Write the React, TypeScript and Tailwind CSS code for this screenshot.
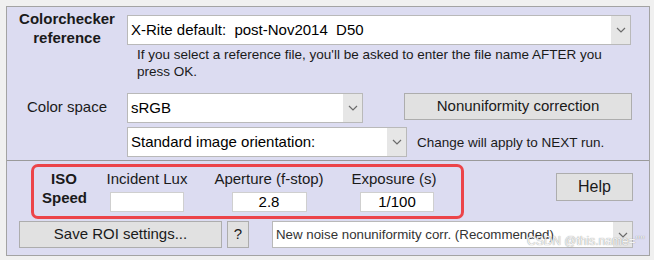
import React from "react";

const font = { fontFamily: '"Liberation Sans", Arial, sans-serif' };

function Chevron() {
  return (
    <svg width="10" height="6" viewBox="0 0 10 6" className="block">
      <polyline points="1,1 5,5 9,1" fill="none" stroke="#6b6b6b" strokeWidth="1.2" />
    </svg>
  );
}

function Dropdown({ text, className, textClass }: { text: string; className: string; textClass?: string }) {
  return (
    <div className={`flex bg-white border border-[#b9b9b9] ${className}`}>
      <div className={`flex-1 flex items-center pl-[3px] whitespace-pre overflow-hidden ${textClass ?? "text-[15px] text-black"}`}>
        {text}
      </div>
      <div className="w-[19px] bg-[#e6e6e6] flex items-center justify-center">
        <Chevron />
      </div>
    </div>
  );
}

export default function App() {
  return (
    <div className="w-[654px] h-[260px] bg-[#f0f0f0] pt-[6px] pl-[6px] relative overflow-hidden" style={font}>
      <div className="w-[644px] h-[250px] border border-[#a3a3a3] bg-[#dcdcf1] flex flex-col">
        {/* Top section */}
        <div className="h-[154px] border-b border-[#9a9a9a] flex flex-col">
          {/* Colorchecker reference */}
          <div className="flex">
            <div className="w-[120px] pt-[2px] text-center font-bold text-[15px] leading-[19px] text-[#1a1a1a]">
              Colorchecker
              <br />
              reference
            </div>
            <div className="flex flex-col pt-[8px]">
              <Dropdown text="X-Rite default:  post-Nov2014  D50" className="w-[504px] h-[30px]" />
              <div className="pl-[10px] pt-[1px] text-[13.5px] leading-[17px] text-[#1a1a1a]">
                If you select a reference file, you'll be asked to enter the file name AFTER you
                <br />
                press OK.
              </div>
            </div>
          </div>

          {/* Color space */}
          <div className="flex mt-[13px]">
            <div className="w-[120px] pt-[4px] text-center text-[15px] leading-[19px] text-[#1a1a1a]">Color space</div>
            <Dropdown text="sRGB" className="w-[236px] h-[30px]" />
            <button className="ml-[41px] w-[228px] h-[27px] bg-[#e1e1e1] border border-[#adadad] text-[15px] text-[#1a1a1a]">
              Nonuniformity correction
            </button>
          </div>

          {/* Orientation */}
          <div className="flex items-center mt-[4px] pl-[120px]">
            <Dropdown text="Standard image orientation:" className="w-[280px] h-[30px]" />
            <div className="ml-[10px] pt-[2px] text-[13.5px] text-[#1a1a1a]">Change will apply to NEXT run.</div>
          </div>
        </div>

        {/* Bottom section */}
        <div className="flex flex-col">
          <div className="flex items-start">
            <div className="ml-[24px] mt-[3px] w-[433px] h-[55px] border-[3px] border-[#ec4449] rounded-[7px] flex items-start">
              <div className="ml-[8px] mt-[2px] w-[44px] text-center font-bold text-[15px] leading-[19px] text-[#1a1a1a]">
                ISO
                <br />
                Speed
              </div>
              <div className="ml-[20px] w-[82px] flex flex-col items-center">
                <div className="text-[15px] leading-[19px] mt-[2px] text-[#1a1a1a]">Incident Lux</div>
                <div className="mt-[4px] w-[74px] h-[20px] bg-white border border-[#cfcfcf]"></div>
              </div>
              <div className="ml-[25px] w-[112px] flex flex-col items-center">
                <div className="text-[15px] leading-[19px] mt-[2px] text-[#1a1a1a]">Aperture (f-stop)</div>
                <div className="mt-[4px] w-[75px] h-[20px] bg-white border border-[#cfcfcf] flex items-center justify-center text-[15px] text-black">
                  2.8
                </div>
              </div>
              <div className="ml-[24px] w-[90px] flex flex-col items-center">
                <div className="text-[15px] leading-[19px] mt-[2px] text-[#1a1a1a]">Exposure (s)</div>
                <div className="mt-[4px] ml-[6px] w-[74px] h-[20px] bg-white border border-[#cfcfcf] flex items-center justify-center text-[15px] text-black">
                  1/100
                </div>
              </div>
            </div>
            <button className="ml-[92px] mt-[12px] w-[77px] h-[28px] bg-[#e1e1e1] border border-[#adadad] text-[16px] text-[#1a1a1a]">
              Help
            </button>
          </div>

          <div className="flex mt-[2px] pl-[12px]">
            <button className="w-[203px] h-[27px] bg-[#e1e1e1] border border-[#adadad] text-[15px] text-[#1a1a1a]">
              Save ROI settings...
            </button>
            <button className="ml-[5px] w-[22px] h-[27px] bg-[#e1e1e1] border border-[#adadad] text-[15px] text-[#1a1a1a]">
              ?
            </button>
            <Dropdown
              text="New noise nonuniformity corr. (Recommended)"
              className="ml-[23px] w-[361px] h-[27px]"
              textClass="text-[13.3px] text-[#333333]"
            />
          </div>
        </div>
      </div>

      <div className="absolute left-[527px] top-[235px] text-[12px] leading-[12px] text-[#f4f4f4] [text-shadow:0_0_1px_#777]">
        CSDN @this.name=''''
      </div>
    </div>
  );
}
